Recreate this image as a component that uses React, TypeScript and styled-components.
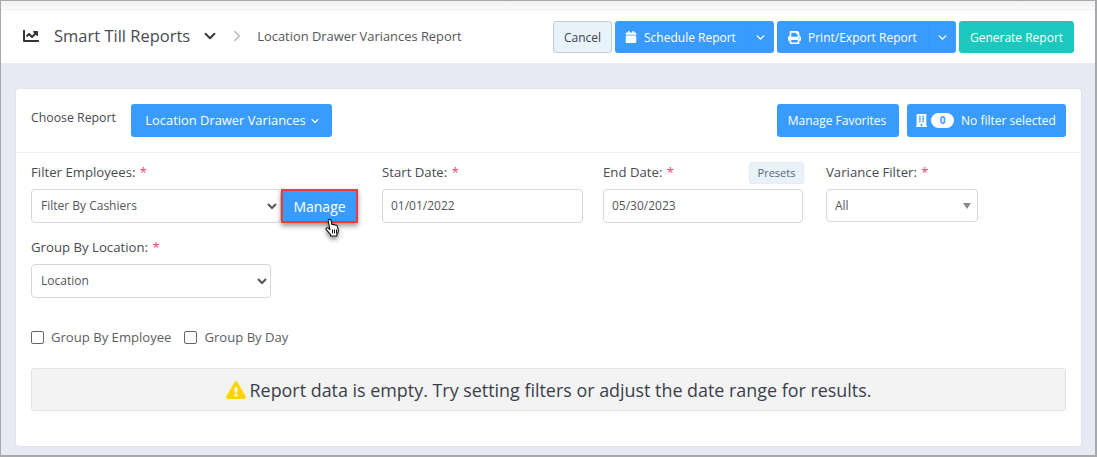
import * as React from 'react'
import styled, { createGlobalStyle } from 'styled-components'
import { ChevronDown, ChevronRight } from 'lucide-react'
import { FaBuilding, FaCalendar, FaChartLine, FaExclamationTriangle, FaPrint } from 'react-icons/fa'

const GlobalStyle = createGlobalStyle`
  html, body {
    margin: 0;
    padding: 0;
    background: #e8eaf3;
    font-family: "Open Sans", "Liberation Sans", sans-serif;
  }
  * { box-sizing: border-box; }
`

const Frame = styled.div`
  width: 1097px;
  height: 457px;
  border: 1px solid #a9a9ab;
  border-bottom-width: 2px;
  border-right-width: 2px;
  background: #e8eaf3;
  overflow: hidden;
  display: flex;
  flex-direction: column;
`

const TopStrip = styled.div`
  height: 9px;
  background: linear-gradient(#f1f1f3, #fafafa);
  border-bottom: 1px solid #eeeef0;
`

const Header = styled.header`
  height: 53px;
  background: #fff;
  display: flex;
  align-items: center;
  justify-content: space-between;
  padding: 0 21px 0 22px;
`

const Crumbs = styled.div`
  display: flex;
  align-items: center;
  color: #3f4254;
  margin-top: -2px;
`

const Title = styled.span`
  font-size: 16.5px;
  margin-left: 15px;
  color: #4a4a4f;
`

const TitleCaret = styled(ChevronDown)`
  margin-left: 11px;
`

const CrumbArrow = styled(ChevronRight)`
  margin-left: 9px;
`

const SubTitle = styled.span`
  font-size: 12.9px;
  color: #55555a;
  margin-left: 11px;
`

const Actions = styled.div`
  display: flex;
  gap: 3px;
  margin-top: 1px;
`

const Cancel = styled.button`
  height: 32px;
  width: 59px;
  padding: 0;
  background: #e8f2fb;
  border: 1px solid #c4ccd4;
  border-radius: 3px;
  font: 12px "Open Sans", sans-serif;
  color: #44444a;
`

const Split = styled.div<{ $width: number }>`
  width: ${p => p.$width}px;
  height: 32px;
  background: #3a9bff;
  border-radius: 3px;
  color: #fff;
  display: flex;
  align-items: center;
  justify-content: space-between;
  font-size: 12px;
`

const SplitLabel = styled.span<{ $pad: number; $gap: number }>`
  display: flex;
  align-items: center;
  gap: ${p => p.$gap}px;
  padding-left: ${p => p.$pad}px;
`

const SplitArrow = styled.span`
  width: 28px;
  height: 100%;
  display: flex;
  align-items: center;
  justify-content: center;
  border-left: 1px solid #3797f8;
`

const Generate = styled.button`
  width: 115px;
  height: 32px;
  margin-left: 0;
  padding: 0;
  background: #1cc7bd;
  border: none;
  border-radius: 3px;
  color: #fff;
  font: 12px "Open Sans", sans-serif;
`

const Card = styled.main`
  margin: 26px 14px 0 15px;
  height: 357px;
  background: #fff;
  border-radius: 3px;
  box-shadow: 0 0 2px rgba(60, 60, 90, 0.12);
`

const CardHead = styled.div`
  height: 64px;
  border-bottom: 1px solid #eceef0;
  padding: 15px 15px 0 15px;
  display: flex;
  align-items: flex-start;
`

const ChooseLabel = styled.span`
  font-size: 12.3px;
  color: #4a4a4f;
  margin-top: 5px;
  width: 100px;
`

const PrimaryButton = styled.button<{ $width: number; $size: number; $shift?: number; $lift?: number }>`
  width: ${p => p.$width}px;
  height: 33px;
  padding: 0 ${p => p.$shift ?? 0}px ${p => p.$lift ?? 0}px 0;
  background: #3a9bff;
  border: none;
  border-radius: 3px;
  color: #fff;
  font: ${p => p.$size}px "Open Sans", sans-serif;
  display: flex;
  align-items: center;
  justify-content: center;
`

const ReportCaret = styled(ChevronDown)`
  margin: 2px -3px 0 3px;
`

const HeadRight = styled.div`
  margin-left: auto;
  display: flex;
  gap: 8px;
`

const Badge = styled.span`
  background: #fff;
  color: #3a9bff;
  border-radius: 9px;
  width: 23px;
  height: 15px;
  font-size: 10px;
  font-weight: 700;
  line-height: 15px;
  text-align: center;
  margin: 0 7px 0 3px;
`

const Form = styled.div`
  padding: 11px 15px 0 15px;
`

const Row = styled.div<{ $top?: number }>`
  display: flex;
  align-items: flex-start;
  margin-top: ${p => p.$top ?? 0}px;
`

const Field = styled.div<{ $width: number; $mr?: number }>`
  position: relative;
  width: ${p => p.$width}px;
  margin-right: ${p => p.$mr ?? 0}px;
`

const Label = styled.label`
  display: block;
  height: 25px;
  font-size: 13.2px;
  line-height: 16px;
  color: #4a4a4f;
`

const Star = styled.span`
  color: #f1416c;
  margin-left: 1px;
`

const InputRow = styled.div`
  display: flex;
`

const Select = styled.select<{ $width: number }>`
  width: ${p => p.$width}px;
  height: 34px;
  padding: 0 0 2px 5px;
  background: #fff;
  border: 1px solid #d5d7da;
  border-radius: 4px;
  font: 12px "Open Sans", sans-serif;
  color: #55555a;
`

const Input = styled.input`
  width: 100%;
  height: 34px;
  padding: 0 8px 1px;
  border: 1px solid #d5d7da;
  border-radius: 4px;
  font: 12px "Open Sans", sans-serif;
  color: #55555a;
`

const FakeSelect = styled.div`
  width: 152px;
  height: 33px;
  padding: 0 8px;
  border: 1px solid #d5d7da;
  border-radius: 4px;
  font-size: 12px;
  line-height: 32px;
  color: #55555a;
  position: relative;

  &::after {
    content: '';
    position: absolute;
    right: 6px;
    top: 13px;
    border-left: 4px solid transparent;
    border-right: 4px solid transparent;
    border-top: 6px solid #8a8a8a;
  }
`

const ManageBox = styled.div`
  position: relative;
  width: 77px;
  height: 34px;
`

const Manage = styled.button`
  width: 100%;
  height: 100%;
  padding: 0;
  background: #3a9bff;
  border: 2px solid #ef3b3b;
  color: #fff;
  font: 14px "Open Sans", sans-serif;
  box-shadow: 0 3px 5px rgba(0, 0, 0, 0.4);
`

const HandCursor = styled.svg`
  position: absolute;
  left: 43px;
  top: 29px;
  filter: drop-shadow(0 3px 2px rgba(0, 0, 0, 0.4));
`

const Presets = styled.span`
  position: absolute;
  right: 0;
  top: -1px;
  width: 53px;
  height: 20px;
  background: #e8f2fb;
  border-radius: 2px;
  box-shadow: 0 0 2px rgba(0, 0, 0, 0.3);
  font-size: 11px;
  line-height: 20px;
  text-align: center;
  color: #5a6472;
`

const Checks = styled.div`
  display: flex;
  align-items: center;
  margin-top: 31px;
  gap: 13px;
  height: 16px;
`

const CheckLabel = styled.label`
  display: flex;
  align-items: center;
  gap: 7px;
  font-size: 13.1px;
  color: #5e5e63;
`

const Box = styled.span`
  width: 13px;
  height: 13px;
  border: 1px solid #66666a;
  border-radius: 2px;
  background: #fff;
`

const Alert = styled.div`
  margin-top: 23px;
  height: 43px;
  background: #f3f3f3;
  border: 1px solid #e3e3e3;
  border-radius: 3px;
  display: flex;
  align-items: center;
  justify-content: center;
  gap: 4px;
  font-size: 17.9px;
  color: #3a3f4c;
`

export default function App() {
  return (
    <Frame>
      <GlobalStyle />
      <TopStrip />
      <Header>
        <Crumbs>
          <FaChartLine size={16} color="#33333a" />
          <Title>Smart Till Reports</Title>
          <TitleCaret size={18} color="#33333a" strokeWidth={2.4} />
          <CrumbArrow size={18} color="#b5b7c0" strokeWidth={2} />
          <SubTitle>Location Drawer Variances Report</SubTitle>
        </Crumbs>
        <Actions>
          <Cancel>Cancel</Cancel>
          <Split $width={159}>
            <SplitLabel $pad={10} $gap={7}>
              <FaCalendar size={12} />
              Schedule Report
            </SplitLabel>
            <SplitArrow>
              <ChevronDown size={13} strokeWidth={2.6} />
            </SplitArrow>
          </Split>
          <Split $width={179}>
            <SplitLabel $pad={11} $gap={7}>
              <FaPrint size={13} />
              Print/Export Report
            </SplitLabel>
            <SplitArrow>
              <ChevronDown size={13} strokeWidth={2.6} />
            </SplitArrow>
          </Split>
          <Generate>Generate Report</Generate>
        </Actions>
      </Header>
      <Card>
        <CardHead>
          <ChooseLabel>Choose Report</ChooseLabel>
          <PrimaryButton $width={201} $size={12.9} $lift={2}>
            Location Drawer Variances
            <ReportCaret size={12} strokeWidth={2.2} />
          </PrimaryButton>
          <HeadRight>
            <PrimaryButton $width={122} $size={12} $shift={2}>Manage Favorites</PrimaryButton>
            <PrimaryButton $width={159} $size={12} $shift={2}>
              <FaBuilding size={13} />
              <Badge>0</Badge>
              No filter selected
            </PrimaryButton>
          </HeadRight>
        </CardHead>
        <Form>
          <Row>
            <Field $width={351}>
              <Label>Filter Employees: <Star>*</Star></Label>
              <InputRow>
                <Select $width={250} defaultValue="cashiers">
                  <option value="cashiers">Filter By Cashiers</option>
                </Select>
                <ManageBox>
                  <Manage>Manage</Manage>
                  <HandCursor width="18" height="20" viewBox="0 0 18 20">
                    <path
                      d="M5 1.5c.9-.5 1.8 0 2 .9l.9 4.3c.5-.5 1.5-.4 1.9.2.5-.4 1.4-.3 1.8.3.6-.3 1.4 0 1.6.7l1 3.6c.5 2-.1 3.6-1.4 5.2V18H6.6v-1.3L2.4 11.8c-.7-.8-.3-1.8.5-2 .6-.2 1.2 0 1.7.5l1.3 1.3L4.3 3.2C4.1 2.5 4.4 1.8 5 1.5z"
                      fill="#fff"
                      stroke="#111"
                      strokeWidth="1.1"
                      strokeLinejoin="round"
                    />
                    <path d="M8.5 11.5v4M10.5 11.5v4M12.5 11.5v4" stroke="#111" strokeWidth="1" />
                  </HandCursor>
                </ManageBox>
              </InputRow>
            </Field>
            <Field $width={201} $mr={20}>
              <Label>Start Date: <Star>*</Star></Label>
              <Input readOnly value="01/01/2022" />
            </Field>
            <Field $width={200} $mr={23}>
              <Label>End Date: <Star>*</Star></Label>
              <Presets>Presets</Presets>
              <Input readOnly value="05/30/2023" />
            </Field>
            <Field $width={152}>
              <Label>Variance Filter: <Star>*</Star></Label>
              <FakeSelect>All</FakeSelect>
            </Field>
          </Row>
          <Row $top={16}>
            <Field $width={240}>
              <Label>Group By Location: <Star>*</Star></Label>
              <Select $width={240} defaultValue="location">
                <option value="location">Location</option>
              </Select>
            </Field>
          </Row>
          <Checks>
            <CheckLabel><Box />Group By Employee</CheckLabel>
            <CheckLabel><Box />Group By Day</CheckLabel>
          </Checks>
          <Alert>
            <FaExclamationTriangle size={20} color="#ffd500" />
            Report data is empty. Try setting filters or adjust the date range for results.
          </Alert>
        </Form>
      </Card>
    </Frame>
  )
}
